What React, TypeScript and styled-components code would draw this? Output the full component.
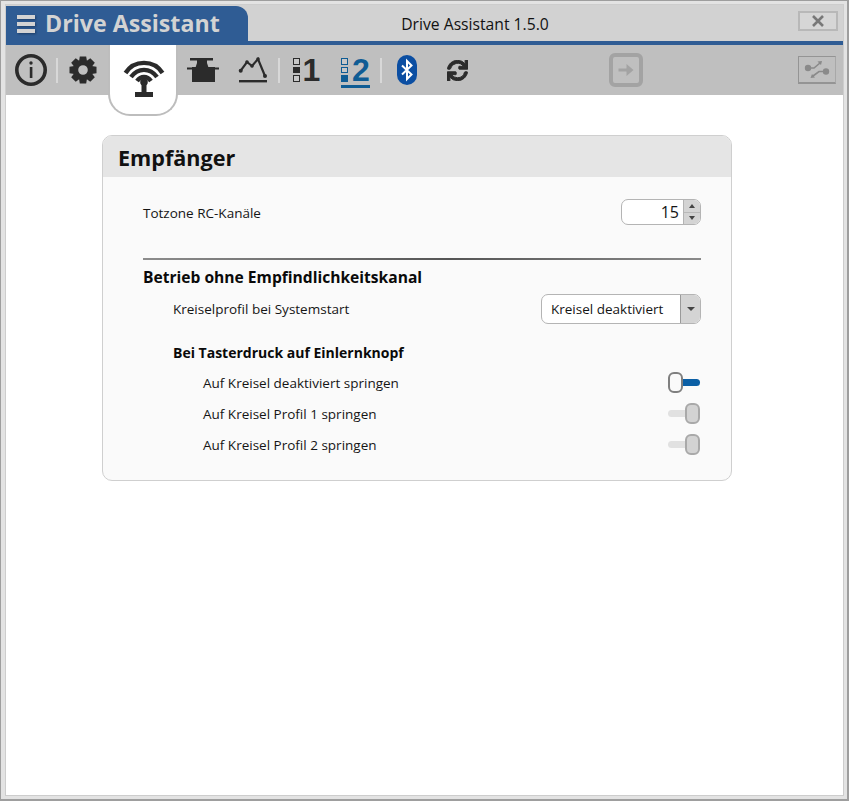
import React from "react";
import styled, { createGlobalStyle } from "styled-components";
import { FaSync } from "react-icons/fa";

const Global = createGlobalStyle`
  html, body { margin: 0; padding: 0; height: 100%; background: #fff; }
  #root { height: 100%; }
  * { box-sizing: border-box; }
`;

const Frame = styled.div`
  width: 849px;
  height: 801px;
  border: solid #9e9e9e;
  border-width: 1px 2px 2px 1px;
  background: #e3e3e3;
  padding: 3px 3px 3px 4px;
  font-family: "Open Sans", "Noto Sans", sans-serif;
  color: #111;
`;
const Inner = styled.div`
  height: 100%;
  border: 1px solid #cdcdcd;
  display: flex;
  flex-direction: column;
  background: #fff;
`;
const TitleBar = styled.div`
  height: 36px;
  flex: none;
  display: flex;
  background: #d2d2d2;
`;
const BrandTab = styled.div`
  width: 242px;
  margin-top: 1px;
  background: #2f5c94;
  border-top-right-radius: 12px;
  display: flex;
  align-items: center;
  gap: 10px;
  padding-left: 11px;
`;
const BrandText = styled.span`
  font: 700 23.2px/1 "Open Sans", sans-serif;
  color: #d3d3d3;
  white-space: nowrap;
`;
const Burger = styled.div`
  width: 18px;
  display: flex;
  flex-direction: column;
  gap: 3px;
  filter: drop-shadow(1px 1px 1px #1d3d66);
`;
const BurgerBar = styled.i`
  display: block;
  height: 4px;
  background: #d3d3d3;
`;
const WindowTitle = styled.div`
  flex: 1;
  text-align: center;
  font-size: 15.7px;
  line-height: 38px;
  padding-right: 96px;
  white-space: nowrap;
  color: #111;
`;
const CloseButton = styled.div`
  width: 40px;
  height: 20px;
  margin: 6px 5px 0 0;
  border: 2px solid #b8b8b8;
  background: #d6d6d6;
  display: flex;
  align-items: center;
  justify-content: center;
`;
const BlueLine = styled.div`
  height: 4px;
  flex: none;
  background: #2f5c94;
`;
const Toolbar = styled.div`
  height: 50px;
  flex: none;
  display: flex;
  align-items: flex-start;
  background: #bfbfbf;
`;
const Slot = styled.div`
  width: 50px;
  height: 50px;
  flex: none;
  display: flex;
  align-items: center;
  justify-content: center;
  color: #2b2b2b;
`;
const Sep = styled.div`
  width: 2px;
  height: 25px;
  margin-top: 13px;
  flex: none;
  background: #d8d8d8;
`;
const ActiveTab = styled.div`
  width: 70px;
  height: 71px;
  flex: none;
  background: #fff;
  border: 2px solid #bdbdbd;
  border-top: 0;
  border-radius: 0 0 22px 22px;
  position: relative;
  z-index: 2;
  display: flex;
  align-items: flex-start;
  justify-content: center;
  padding: 14px 0 0 2px;
`;
const ArrowSlot = styled(Slot)`
  margin-left: 119px;
`;
const ConnectButton = styled.div`
  width: 38px;
  height: 28px;
  margin: 11px 7px 0 auto;
  border: 1px solid #949494;
  border-bottom-width: 2px;
  border-right-color: #a8a8a8;
  display: flex;
  align-items: center;
  justify-content: center;
`;
const ProfileGlyph = styled.div<{ $active?: boolean }>`
  display: flex;
  align-items: center;
  gap: ${(p) => (p.$active ? "4px" : "3px")};
  height: 33px;
  margin: 3px 0 0 ${(p) => (p.$active ? "1px" : "3px")};
  color: ${(p) => (p.$active ? "#0f5c94" : "#2b2b2b")};
  border-bottom: 3px solid ${(p) => (p.$active ? "#0f5c94" : "transparent")};
`;
const ProfileDigit = styled.span`
  font: 700 32px/1 "Liberation Sans", Arial, sans-serif;
`;
const Dots = styled.div`
  display: flex;
  flex-direction: column;
  gap: 2px;
`;
const Dot = styled.i<{ $on?: boolean }>`
  display: block;
  width: 7px;
  height: 6.5px;
  border: 1px solid currentColor;
  background: ${(p) => (p.$on ? "currentColor" : "#c8c8c8")};
`;
const Content = styled.main`
  flex: 1;
  padding: 40px 0 0 96px;
  background: #fff;
`;
const Card = styled.section`
  width: 630px;
  height: 346px;
  border: 1px solid #cfcfcf;
  border-radius: 10px;
  background: #fafafa;
  overflow: hidden;
`;
const CardHeader = styled.h2`
  margin: 0;
  height: 41px;
  padding-left: 15px;
  background: #e5e5e5;
  font: 700 21.6px/43px "Open Sans", sans-serif;
  color: #111;
`;
const CardBody = styled.div`
  padding: 22px 30px 0 40px;
`;
const Row = styled.div<{ $indent?: number; $h?: number; $top?: number }>`
  display: flex;
  align-items: center;
  justify-content: space-between;
  height: ${(p) => p.$h ?? 26}px;
  margin-top: ${(p) => p.$top ?? 0}px;
  padding-left: ${(p) => p.$indent ?? 0}px;
  font-size: 13.5px;
  color: #151515;
`;
const SpinnerLabel = styled.span`
  padding-top: 2px;
`;
const Divider = styled.hr`
  margin: 33px 0 0;
  height: 2px;
  border: 0;
  background: linear-gradient(90deg, #8c8c8c 0%, #555 55%, #8a8a8a 100%);
`;
const SectionTitle = styled.h3`
  margin: 7px 0 0;
  font: 700 15.6px/20px "Open Sans", sans-serif;
  color: #0a0a0a;
`;
const SubTitle = styled.h4`
  margin: 20px 0 5px 30px;
  font: 700 14px/18px "Open Sans", sans-serif;
  color: #0a0a0a;
`;
const Spinner = styled.div`
  width: 80px;
  height: 26px;
  display: flex;
  border: 1px solid #b4b4b4;
  border-radius: 7px;
  background: #fff;
  overflow: hidden;
`;
const SpinnerValue = styled.div`
  flex: 1;
  text-align: right;
  padding-right: 4px;
  font-size: 16px;
  line-height: 24px;
`;
const SpinnerButtons = styled.div`
  width: 17px;
  display: flex;
  flex-direction: column;
  border-left: 1px solid #b4b4b4;
  background: #d4d4d4;
`;
const SpinnerBtn = styled.div`
  flex: 1;
  display: flex;
  align-items: center;
  justify-content: center;
  font-size: 0;
  & + & { border-top: 1px solid #b9b9b9; }
`;
const Triangle = styled.i<{ $up?: boolean; $w?: number }>`
  display: block;
  width: 0;
  height: 0;
  border-left: ${(p) => p.$w ?? 3.5}px solid transparent;
  border-right: ${(p) => p.$w ?? 3.5}px solid transparent;
  ${(p) => (p.$up ? "border-bottom" : "border-top")}: ${(p) => (p.$w ?? 3.5) + 0.5}px solid #444;
`;
const Select = styled.div`
  width: 160px;
  height: 30px;
  display: flex;
  border: 1px solid #b4b4b4;
  border-radius: 7px;
  background: #fff;
  overflow: hidden;
`;
const SelectValue = styled.div`
  flex: 1;
  padding-left: 9px;
  font-size: 13.5px;
  line-height: 29px;
  color: #151515;
`;
const SelectArrow = styled.div`
  width: 20px;
  display: flex;
  align-items: center;
  justify-content: center;
  border-left: 1px solid #9a9a9a;
  background: #d4d4d4;
`;
const Track = styled.div<{ $on?: boolean }>`
  position: relative;
  width: 32px;
  height: 7px;
  margin-right: 1px;
  border-radius: 4px;
  background: ${(p) => (p.$on ? "#0b5fa5" : "#e1e1e1")};
`;
const Knob = styled.div<{ $on?: boolean }>`
  position: absolute;
  top: -7px;
  ${(p) => (p.$on ? "left: 0;" : "right: 0;")}
  width: 15px;
  height: 21px;
  border: 2px solid ${(p) => (p.$on ? "#7f7f7f" : "#a9a9a9")};
  border-radius: 6px;
  background: ${(p) => (p.$on ? "#fafafa" : "#d3d3d3")};
`;

const ToggleRow = ({ label, on }: { label: string; on?: boolean }) => (
  <Row $indent={60} $h={31}>
    <span>{label}</span>
    <Track $on={on}>
      <Knob $on={on} />
    </Track>
  </Row>
);

const Profile = ({ digit, active, filled }: { digit: string; active?: boolean; filled: number }) => (
  <ProfileGlyph $active={active}>
    <Dots>
      {[0, 1, 2].map((i) => (
        <Dot key={i} $on={i === filled} />
      ))}
    </Dots>
    <ProfileDigit>{digit}</ProfileDigit>
  </ProfileGlyph>
);

const Gear = () => (
  <svg width="28" height="28" viewBox="0 0 28 28">
    <g fill="#2b2b2b">
      {[0, 45, 90, 135, 180, 225, 270, 315].map((a) => (
        <path key={a} d="M10.8 0.5h6.400l0.800 5h-8z" transform={`rotate(${a} 14 14)`} />
      ))}
    </g>
    <circle cx="14" cy="14" r="7.400" fill="none" stroke="#2b2b2b" strokeWidth="5.200" />
  </svg>
);

export default function App() {
  return (
    <>
      <Global />
      <Frame>
        <Inner>
          <TitleBar>
            <BrandTab>
              <Burger>
                <BurgerBar />
                <BurgerBar />
                <BurgerBar />
              </Burger>
              <BrandText>Drive Assistant</BrandText>
            </BrandTab>
            <WindowTitle>Drive Assistant 1.5.0</WindowTitle>
            <CloseButton>
              <svg width="14" height="12" viewBox="0 0 14 12">
                <path d="M2 1 L12 11 M12 1 L2 11" stroke="#787878" strokeWidth="2.6" fill="none" />
              </svg>
            </CloseButton>
          </TitleBar>
          <BlueLine />
          <Toolbar>
            <Slot>
              <svg width="34" height="34" viewBox="0 0 34 34">
                <circle cx="17" cy="17" r="14.2" fill="none" stroke="#2b2b2b" strokeWidth="3.6" />
                <circle cx="17" cy="10" r="1.700" fill="#2b2b2b" />
                <path d="M15.800 14h2.600v11h-2.600z" fill="#2b2b2b" />
              </svg>
            </Slot>
            <Sep />
            <Slot>
              <Gear />
            </Slot>
            <ActiveTab>
              <svg width="42" height="40" viewBox="0 0 42 40">
                <g fill="none" stroke="#2b2b2b" strokeWidth="4.400">
                  <path d="M2.500 14 C11 0.500 31 0.500 39.500 14" />
                  <path d="M8 18 C15 8.500 27 8.500 34 18" />
                  <path d="M14 22 C18 16.500 24 16.500 28 22" />
                </g>
                <circle cx="21" cy="23" r="3.800" fill="#2b2b2b" />
                <path d="M18.500 24h5v9h-5z M12 33h18v5H12z" fill="#2b2b2b" />
              </svg>
            </ActiveTab>
            <Slot>
              <svg width="32" height="26" viewBox="0 0 32 26">
                <path d="M3 1h23v2.500H20V6l1.500 4.500h-13L10 6V3.500H3z M0 10.500h5V10h23v0.500h4v2h-4V25H5V12.500H0z" fill="#2b2b2b" />
              </svg>
            </Slot>
            <Slot>
              <svg width="30" height="28" viewBox="0 0 30 28">
                <path d="M2.700 14.700 L9 6 L14 10 L20 3 L27 20" fill="none" stroke="#2b2b2b" strokeWidth="2.200" />
                <g fill="#2b2b2b">
                  <circle cx="2.700" cy="14.700" r="2" />
                  <circle cx="9" cy="6" r="1.800" />
                  <circle cx="14" cy="10" r="1.800" />
                  <circle cx="20" cy="3" r="1.800" />
                  <circle cx="27" cy="20" r="2" />
                  <path d="M1 24h28v2.400H1z" />
                </g>
              </svg>
            </Slot>
            <Sep />
            <Slot>
              <Profile digit="1" filled={1} />
            </Slot>
            <Slot>
              <Profile digit="2" active filled={2} />
            </Slot>
            <Sep />
            <Slot>
              <svg width="20" height="30" viewBox="0 0 20 30">
                <rect width="20" height="30" rx="10" fill="#0b4ea2" />
                <path d="M5 10.500 L14.500 19.500 L10 24 V6 L14.500 10.500 L5 19.500" fill="none" stroke="#fff" strokeWidth="2" />
              </svg>
            </Slot>
            <Slot>
              <FaSync size={21} stroke="currentColor" strokeWidth={24} />
            </Slot>
            <ArrowSlot>
              <svg width="34" height="34" viewBox="0 0 34 34">
                <rect x="2" y="2" width="30" height="30" rx="4" fill="none" stroke="#a3a3a3" strokeWidth="4" />
                <path d="M9.500 15.500h8V11l7 6-7 6v-4.500h-8z" fill="#a3a3a3" />
              </svg>
            </ArrowSlot>
            <ConnectButton>
              <svg width="26" height="20" viewBox="0 0 26 20">
                <g fill="#8a8a8a">
                  <circle cx="4" cy="8" r="3.200" />
                  <circle cx="22" cy="11.500" r="3.200" />
                </g>
                <path d="M5 8 H10 L16 3 M20 11.500 H15 L9 16" fill="none" stroke="#8a8a8a" strokeWidth="1.600" />
                <path d="M13.500 1.500 L18 1 L17 5z M11 17.500 L6.500 18 L8 14z" fill="#8a8a8a" />
              </svg>
            </ConnectButton>
          </Toolbar>
          <Content>
            <Card>
              <CardHeader>Empfänger</CardHeader>
              <CardBody>
                <Row>
                  <SpinnerLabel>Totzone RC-Kanäle</SpinnerLabel>
                  <Spinner>
                    <SpinnerValue>15</SpinnerValue>
                    <SpinnerButtons>
                      <SpinnerBtn>
                        <Triangle $up />
                      </SpinnerBtn>
                      <SpinnerBtn>
                        <Triangle />
                      </SpinnerBtn>
                    </SpinnerButtons>
                  </Spinner>
                </Row>
                <Divider />
                <SectionTitle>Betrieb ohne Empfindlichkeitskanal</SectionTitle>
                <Row $indent={30} $h={30} $top={7}>
                  <span>Kreiselprofil bei Systemstart</span>
                  <Select>
                    <SelectValue>Kreisel deaktiviert</SelectValue>
                    <SelectArrow>
                      <Triangle $w={4} />
                    </SelectArrow>
                  </Select>
                </Row>
                <SubTitle>Bei Tasterdruck auf Einlernknopf</SubTitle>
                <ToggleRow label="Auf Kreisel deaktiviert springen" on />
                <ToggleRow label="Auf Kreisel Profil 1 springen" />
                <ToggleRow label="Auf Kreisel Profil 2 springen" />
              </CardBody>
            </Card>
          </Content>
        </Inner>
      </Frame>
    </>
  );
}
